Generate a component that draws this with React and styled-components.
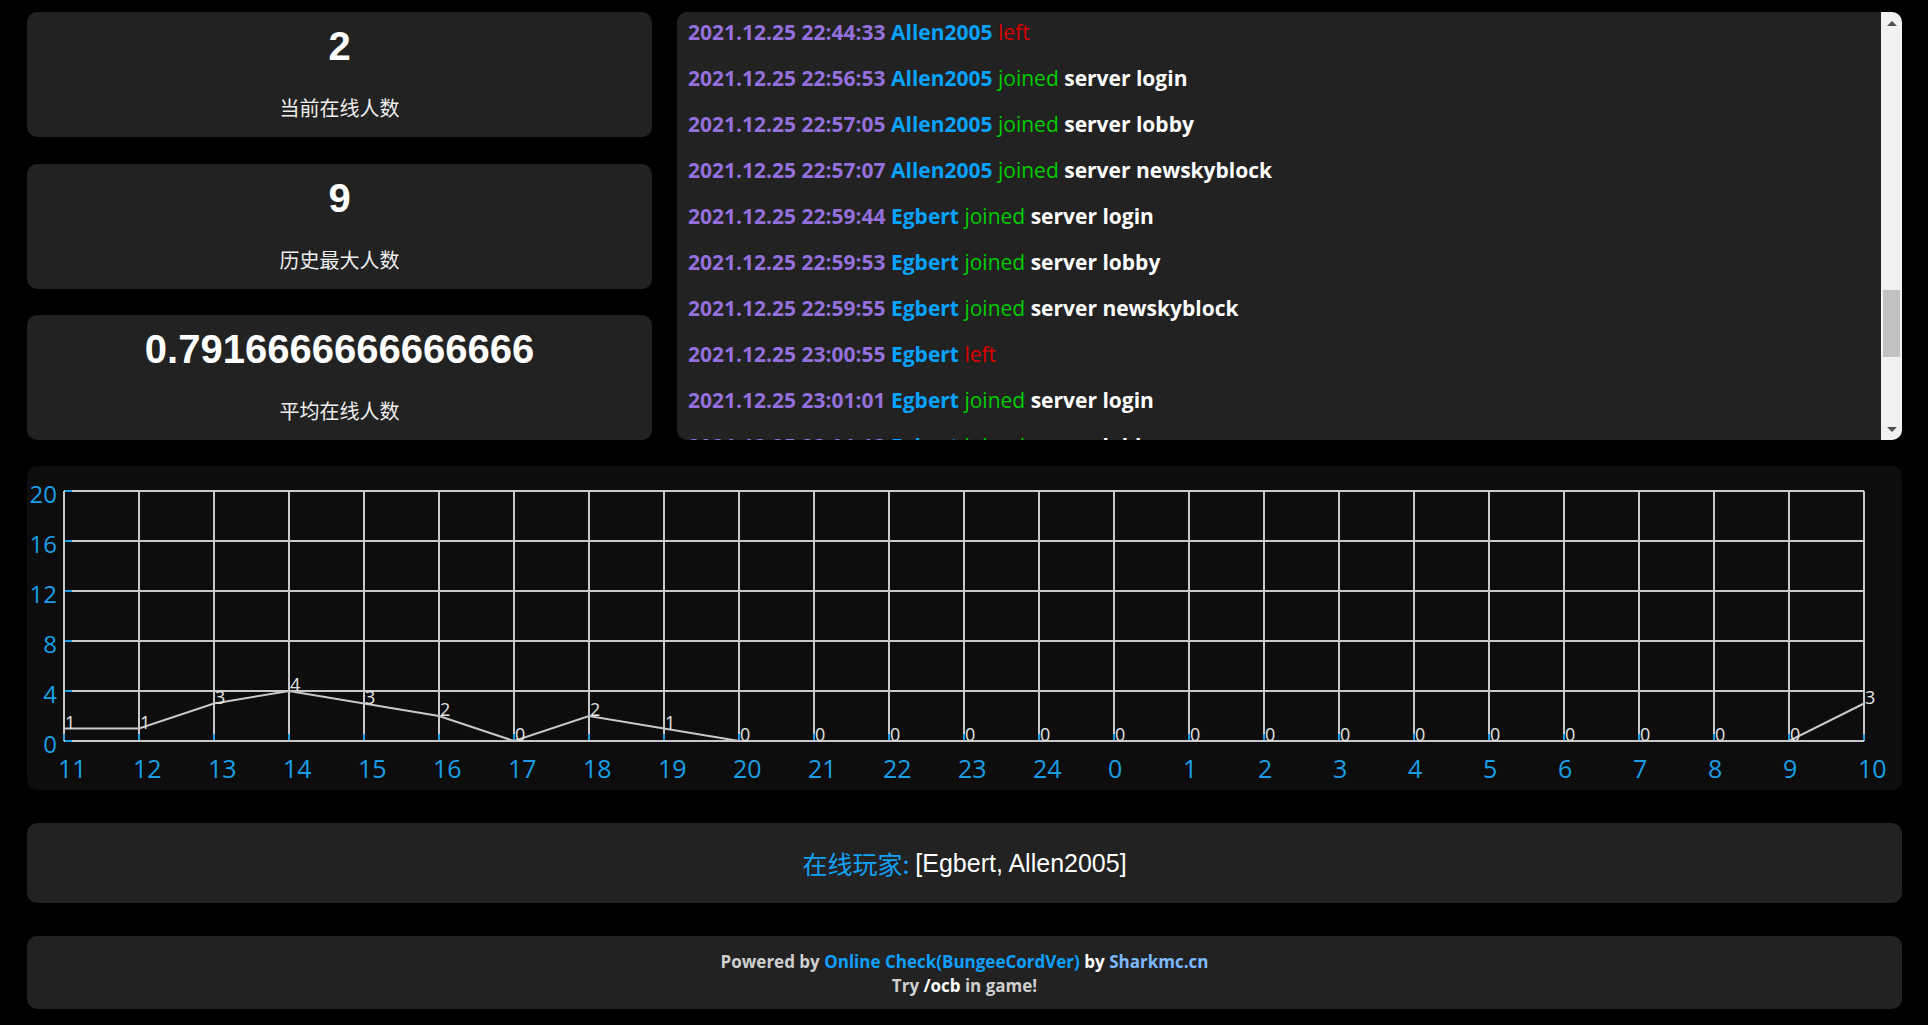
import React, { useLayoutEffect, useRef } from "react";
import styled, { createGlobalStyle } from "styled-components";

const GlobalStyle = createGlobalStyle`
  html, body {
    margin: 0;
    padding: 0;
    background: #000;
  }
  body {
    font-family: "Open Sans", "Noto Sans CJK SC", sans-serif;
  }
`;

const Page = styled.div`
  padding: 12px 26px 16px 27px;
  display: flex;
  flex-direction: column;
`;

const TopRow = styled.div`
  display: grid;
  grid-template-columns: 625px 1fr;
  gap: 25px;
  height: 428px;
`;

const StatColumn = styled.div`
  display: flex;
  flex-direction: column;
  justify-content: space-between;
`;

const StatCard = styled.div`
  height: 125px;
  box-sizing: border-box;
  padding: 11px 0 16px;
  background: #222;
  border-radius: 10px;
  text-align: center;
`;

const StatValue = styled.div`
  font-family: "Liberation Sans", Arial, sans-serif;
  font-weight: 700;
  font-size: 40px;
  line-height: 46px;
  color: #fff;
`;

const StatLabel = styled.div`
  margin-top: 26px;
  font-family: "Noto Sans CJK SC", sans-serif;
  font-size: 20px;
  line-height: 26px;
  color: #eee;
`;

const LogPanel = styled.div`
  display: flex;
  background: #222;
  border-radius: 10px;
  overflow: hidden;
  min-width: 0;
`;

const LogScroll = styled.div`
  flex: 1;
  min-width: 0;
  overflow: hidden;
  padding-left: 11px;
`;

const ScrollTrack = styled.div`
  width: 21px;
  flex-shrink: 0;
  background: #f1f1f1;
  display: flex;
  flex-direction: column;
`;

const ScrollArrow = styled.div`
  height: 21px;
  display: flex;
  align-items: ${(p) => (p.$down ? "flex-start" : "flex-end")};
  justify-content: center;
  padding: ${(p) => (p.$down ? "8px 0 0" : "0 0 7px")};
  box-sizing: border-box;

  &::before {
    content: "";
    border-left: 5px solid transparent;
    border-right: 5px solid transparent;
    ${(p) => (p.$down ? "border-top: 5px solid #505050;" : "border-bottom: 5px solid #505050;")}
  }
`;

const ScrollRail = styled.div`
  flex: 1;
  padding: 0 2px;
`;

const ScrollThumb = styled.div`
  background: #c1c1c1;
`;

const LogRow = styled.div`
  height: 46px;
  line-height: 46px;
  font-size: 21px;
  white-space: nowrap;
`;

const Time = styled.span`
  color: #9370db;
  font-weight: 700;
`;

const Name = styled.span`
  color: #0aa2ff;
  font-weight: 700;
`;

const Action = styled.span`
  color: ${(p) => (p.$left ? "#dd0000" : "#00cc00")};
  font-weight: 400;
`;

const Server = styled.span`
  color: #fff;
  font-weight: 700;
`;

const ChartBox = styled.div`
  margin-top: 26px;
  height: 324px;
  background: #0d0d0d;
  border-radius: 10px;
  font-family: "Open Sans", sans-serif;

  svg {
    display: block;
  }
`;

const Players = styled.div`
  margin-top: 33px;
  height: 80px;
  background: #222;
  border-radius: 10px;
  display: flex;
  align-items: center;
  justify-content: center;
  font-size: 25px;
`;

const PlayersLabel = styled.span`
  font-family: "Noto Sans CJK SC", sans-serif;
  color: #14a0f5;
  margin-right: 6px;
`;

const PlayersList = styled.span`
  font-family: "Liberation Sans", Arial, sans-serif;
  color: #fff;
`;

const Footer = styled.div`
  margin-top: 33px;
  height: 73px;
  box-sizing: border-box;
  padding-top: 3px;
  background: #222;
  border-radius: 10px;
  display: flex;
  flex-direction: column;
  align-items: center;
  justify-content: center;
  font-size: 17px;
  font-weight: 700;
  line-height: 24px;
  color: #cfcfcf;
`;

const Hl = styled.span`
  color: ${(p) => p.$c};
`;

const earlier = [
  ["2021.12.25 10:12:40", "Allen2005", "joined", "login"],
  ["2021.12.25 10:12:52", "Allen2005", "joined", "lobby"],
  ["2021.12.25 10:13:01", "Allen2005", "joined", "newskyblock"],
  ["2021.12.25 11:05:17", "Allen2005", "left"],
  ["2021.12.25 12:31:09", "Egbert", "joined", "login"],
  ["2021.12.25 12:31:20", "Egbert", "joined", "lobby"],
  ["2021.12.25 12:31:24", "Egbert", "joined", "newskyblock"],
  ["2021.12.25 12:48:02", "Allen2005", "joined", "login"],
  ["2021.12.25 12:48:15", "Allen2005", "joined", "lobby"],
  ["2021.12.25 12:48:19", "Allen2005", "joined", "newskyblock"],
  ["2021.12.25 13:20:44", "Steve_Lin", "joined", "login"],
  ["2021.12.25 13:20:58", "Steve_Lin", "joined", "lobby"],
  ["2021.12.25 13:21:03", "Steve_Lin", "joined", "newskyblock"],
  ["2021.12.25 13:47:36", "xiaoyu", "joined", "login"],
  ["2021.12.25 13:47:49", "xiaoyu", "joined", "lobby"],
  ["2021.12.25 14:35:12", "xiaoyu", "left"],
  ["2021.12.25 14:52:30", "Steve_Lin", "left"],
  ["2021.12.25 15:10:08", "Egbert", "left"],
  ["2021.12.25 16:02:41", "Allen2005", "left"],
  ["2021.12.25 16:40:19", "Egbert", "joined", "login"],
  ["2021.12.25 16:40:31", "Egbert", "joined", "lobby"],
  ["2021.12.25 16:40:36", "Egbert", "joined", "newskyblock"],
  ["2021.12.25 16:58:57", "Egbert", "left"],
  ["2021.12.25 17:44:21", "Allen2005", "joined", "login"],
  ["2021.12.25 17:44:33", "Allen2005", "joined", "lobby"],
  ["2021.12.25 17:44:38", "Allen2005", "joined", "newskyblock"],
  ["2021.12.25 17:52:10", "Egbert", "joined", "login"],
  ["2021.12.25 17:52:22", "Egbert", "joined", "lobby"],
  ["2021.12.25 17:52:27", "Egbert", "joined", "newskyblock"],
  ["2021.12.25 18:36:45", "Egbert", "left"],
  ["2021.12.25 19:14:02", "Allen2005", "left"],
  ["2021.12.25 22:20:11", "Allen2005", "joined", "login"],
  ["2021.12.25 22:20:24", "Allen2005", "joined", "lobby"],
  ["2021.12.25 22:20:29", "Allen2005", "joined", "newskyblock"],
  ["2021.12.25 22:31:50", "Allen2005", "joined", "lobby"],
  ["2021.12.25 22:31:56", "Allen2005", "joined", "newskyblock"],
];

const visible = [
  ["2021.12.25 22:44:33", "Allen2005", "left"],
  ["2021.12.25 22:56:53", "Allen2005", "joined", "login"],
  ["2021.12.25 22:57:05", "Allen2005", "joined", "lobby"],
  ["2021.12.25 22:57:07", "Allen2005", "joined", "newskyblock"],
  ["2021.12.25 22:59:44", "Egbert", "joined", "login"],
  ["2021.12.25 22:59:53", "Egbert", "joined", "lobby"],
  ["2021.12.25 22:59:55", "Egbert", "joined", "newskyblock"],
  ["2021.12.25 23:00:55", "Egbert", "left"],
  ["2021.12.25 23:01:01", "Egbert", "joined", "login"],
  ["2021.12.25 23:01:13", "Egbert", "joined", "lobby"],
  ["2021.12.25 23:01:18", "Egbert", "joined", "newskyblock"],
  ["2021.12.26 09:40:26", "Allen2005", "joined", "login"],
  ["2021.12.26 09:40:39", "Allen2005", "joined", "lobby"],
  ["2021.12.26 09:40:44", "Allen2005", "joined", "newskyblock"],
  ["2021.12.26 10:02:15", "Steve_Lin", "joined", "login"],
  ["2021.12.26 10:02:27", "Steve_Lin", "joined", "lobby"],
  ["2021.12.26 10:05:51", "Steve_Lin", "left"],
  ["2021.12.26 10:10:03", "Egbert", "joined", "newskyblock"],
];

const logs = [...earlier, ...visible];

// scrollbar geometry, derived from the scroll offset
const ROW = 46;
const VIEW = 428;
const RAIL = VIEW - 42;
const SCROLL_TOP = earlier.length * ROW + 3;
const TOTAL = logs.length * ROW;
const THUMB = Math.round((RAIL * VIEW) / TOTAL);
const THUMB_TOP = Math.round((SCROLL_TOP / (TOTAL - VIEW)) * (RAIL - THUMB));

const hours = [11, 12, 13, 14, 15, 16, 17, 18, 19, 20, 21, 22, 23, 24, 0, 1, 2, 3, 4, 5, 6, 7, 8, 9, 10];
const counts = [1, 1, 3, 4, 3, 2, 0, 2, 1, 0, 0, 0, 0, 0, 0, 0, 0, 0, 0, 0, 0, 0, 0, 0, 3];
const steps = [0, 4, 8, 12, 16, 20];

const X0 = 37;
const DX = 75;
const Y0 = 275;
const UNIT = 12.5;
const px = (i) => X0 + DX * i;
const py = (v) => Y0 - UNIT * v;

const GRID = "#c8c8c8";
const AXIS = "#1a9fe6";

const Chart = () => {
  const right = px(hours.length - 1);
  return (
    <svg width="100%" height="324" viewBox="0 0 1875 324">
      {steps.map((v) => (
        <line key={"h" + v} x1={X0} x2={right} y1={py(v)} y2={py(v)} stroke={GRID} strokeWidth="2" />
      ))}
      {hours.map((h, i) => (
        <line key={"v" + i} x1={px(i)} x2={px(i)} y1={py(20)} y2={Y0} stroke={GRID} strokeWidth="2" />
      ))}
      {hours.map((h, i) => (
        <line key={"t" + i} x1={px(i)} x2={px(i)} y1={Y0 - 7} y2={Y0 - 1} stroke={AXIS} strokeWidth="2" />
      ))}
      {steps.map((v) => (
        <line key={"yt" + v} x1={X0 + 1} x2={X0 + 8} y1={py(v)} y2={py(v)} stroke={AXIS} strokeWidth="2" />
      ))}
      <polyline
        points={counts.map((c, i) => `${px(i)},${py(c)}`).join(" ")}
        fill="none"
        stroke={GRID}
        strokeWidth="2"
      />
      {counts.map((c, i) => (
        <text key={"d" + i} x={px(i) + 1} y={py(c)} fontSize="18" fill="#e4e4e4">
          {c}
        </text>
      ))}
      {steps.map((v) => (
        <text key={"yl" + v} x={30} y={py(v) + 12} fontSize="24" fill={AXIS} textAnchor="end">
          {v}
        </text>
      ))}
      {hours.map((h, i) => (
        <text key={"xl" + i} x={px(i) - 6} y={312} fontSize="25" fill={AXIS}>
          {h}
        </text>
      ))}
    </svg>
  );
};

export default function App() {
  const logRef = useRef(null);

  useLayoutEffect(() => {
    if (logRef.current) logRef.current.scrollTop = SCROLL_TOP;
  }, []);

  return (
    <>
      <GlobalStyle />
      <Page>
        <TopRow>
          <StatColumn>
            <StatCard>
              <StatValue>2</StatValue>
              <StatLabel>当前在线人数</StatLabel>
            </StatCard>
            <StatCard>
              <StatValue>9</StatValue>
              <StatLabel>历史最大人数</StatLabel>
            </StatCard>
            <StatCard>
              <StatValue>0.7916666666666666</StatValue>
              <StatLabel>平均在线人数</StatLabel>
            </StatCard>
          </StatColumn>
          <LogPanel>
            <LogScroll ref={logRef}>
              {logs.map(([time, name, action, server], i) => (
                <LogRow key={i}>
                  <Time>{time}</Time> <Name>{name}</Name>{" "}
                  <Action $left={action === "left"}>{action}</Action>
                  {server && <Server> server {server}</Server>}
                </LogRow>
              ))}
            </LogScroll>
            <ScrollTrack>
              <ScrollArrow />
              <ScrollRail>
                <ScrollThumb style={{ marginTop: THUMB_TOP, height: THUMB }} />
              </ScrollRail>
              <ScrollArrow $down />
            </ScrollTrack>
          </LogPanel>
        </TopRow>
        <ChartBox>
          <Chart />
        </ChartBox>
        <Players>
          <PlayersLabel>在线玩家:</PlayersLabel>
          <PlayersList>[Egbert, Allen2005]</PlayersList>
        </Players>
        <Footer>
          <div>
            Powered by <Hl $c="#0fa0ff">Online Check(BungeeCordVer)</Hl> <Hl $c="#fff">by</Hl>{" "}
            <Hl $c="#7db9ff">Sharkmc.cn</Hl>
          </div>
          <div>
            Try <Hl $c="#fff">/ocb</Hl> in game!
          </div>
        </Footer>
      </Page>
    </>
  );
}
